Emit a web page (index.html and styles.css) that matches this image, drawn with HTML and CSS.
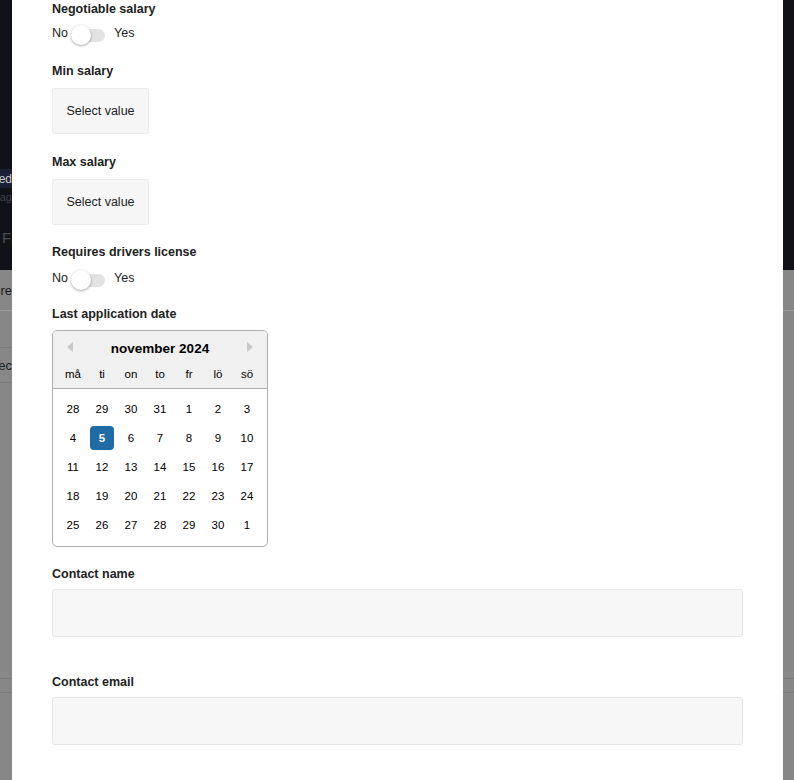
FILE: index.html
```html
<!DOCTYPE html>
<html lang="en">
<head>
<meta charset="utf-8">
<title>Job form</title>
<link rel="stylesheet" href="styles.css">
</head>
<body>
<div class="backdrop">
  <div class="bg-top">
    <div class="bg-band"><span>xed</span></div>
    <div class="bg-sub"><span>ag</span></div>
    <div class="bg-fa">Fä</div>
  </div>
  <div class="bg-bottom">
    <div class="bg-row bg-row1"><span>dre</span></div>
    <div class="bg-row bg-row2"></div>
    <div class="bg-row bg-row3"><span>sec</span></div>
    <div class="bg-foot"></div>
  </div>
</div>

<div class="modal">
  <div class="label">Negotiable salary</div>
  <div class="toggle-row first">
    <span>No</span>
    <span class="switch"><span class="track"></span><span class="knob"></span></span>
    <span class="yes">Yes</span>
  </div>

  <div class="label">Min salary</div>
  <div class="select-box">Select value</div>

  <div class="label">Max salary</div>
  <div class="select-box last">Select value</div>

  <div class="label">Requires drivers license</div>
  <div class="toggle-row second">
    <span>No</span>
    <span class="switch"><span class="track"></span><span class="knob"></span></span>
    <span class="yes">Yes</span>
  </div>

  <div class="label tight">Last application date</div>
  <div class="calendar">
    <div class="cal-header">
      <div class="cal-nav">
        <span class="arrow arrow-left"></span>
        <span class="cal-title">november 2024</span>
        <span class="arrow arrow-right"></span>
      </div>
      <div class="cal-grid cal-names">
        <span>må</span><span>ti</span><span>on</span><span>to</span><span>fr</span><span>lö</span><span>sö</span>
      </div>
    </div>
    <div class="cal-body">
      <div class="cal-grid">
        <span>28</span><span>29</span><span>30</span><span>31</span><span>1</span><span>2</span><span>3</span>
        <span>4</span><span class="sel">5</span><span>6</span><span>7</span><span>8</span><span>9</span><span>10</span>
        <span>11</span><span>12</span><span>13</span><span>14</span><span>15</span><span>16</span><span>17</span>
        <span>18</span><span>19</span><span>20</span><span>21</span><span>22</span><span>23</span><span>24</span>
        <span>25</span><span>26</span><span>27</span><span>28</span><span>29</span><span>30</span><span>1</span>
      </div>
    </div>
  </div>

  <div class="label contact">Contact name</div>
  <div class="text-input name"></div>

  <div class="label contact">Contact email</div>
  <div class="text-input"></div>
</div>
</body>
</html>
```
FILE: styles.css
```css
html, body {
  margin: 0;
  padding: 0;
}
body {
  width: 794px;
  height: 780px;
  overflow: hidden;
  position: relative;
  font-family: "Liberation Sans", Arial, Helvetica, sans-serif;
  color: #222;
}

/* dimmed page behind the modal */
.backdrop {
  width: 794px;
  height: 780px;
  display: flex;
  flex-direction: column;
}
.bg-top {
  height: 270px;
  background: #111218;
  padding-top: 169px;
  box-sizing: border-box;
}
.bg-band {
  width: 12px;
  height: 19px;
  background: #1b2133;
  display: flex;
  justify-content: flex-end;
  align-items: center;
  white-space: nowrap;
  font-size: 12px;
  color: #c9ccd3;
}
.bg-sub {
  width: 12px;
  height: 17px;
  display: flex;
  justify-content: flex-end;
  align-items: center;
  white-space: nowrap;
  font-size: 11px;
  color: #3d3f48;
}
.bg-fa {
  margin-top: 24px;
  padding-left: 2px;
  font-size: 15px;
  line-height: 18px;
  color: #4a4c55;
  white-space: nowrap;
}
.bg-bottom {
  flex: 1;
  background: #878787;
}
.bg-row {
  width: 300px;
  display: flex;
  align-items: center;
  box-sizing: border-box;
  border-bottom: 1px solid #9a9a9a;
}
.bg-row span {
  width: 12px;
  display: flex;
  justify-content: flex-end;
  white-space: nowrap;
  font-size: 13px;
  color: #1c1c1c;
}
.bg-row1 {
  width: 100%;
  height: 41px;
}
.bg-row2 {
  height: 37px;
  border-bottom-color: #7c7c7c;
}
.bg-row3 {
  height: 35px;
  border-bottom-color: #7c7c7c;
}
.bg-foot {
  margin-top: 295px;
  height: 15px;
  box-sizing: border-box;
  border-top: 1px solid #7c7c7c;
  border-bottom: 1px solid #7c7c7c;
}

/* modal */
.modal {
  position: absolute;
  left: 12px;
  top: 0;
  width: 771px;
  height: 780px;
  box-sizing: border-box;
  background: #fff;
  padding: 1px 40px 0;
}
.label {
  font-size: 12.5px;
  font-weight: bold;
  line-height: 16px;
  color: #222;
  margin-bottom: 9px;
}
.label.tight {
  margin-bottom: 8px;
}
.label.contact {
  margin-bottom: 7px;
}
.toggle-row {
  display: flex;
  align-items: center;
  height: 22px;
  font-size: 12.5px;
  color: #222;
}
.toggle-row.first {
  margin-top: -4px;
  margin-bottom: 19px;
}
.toggle-row.second {
  margin-top: -2px;
  margin-bottom: 17px;
}
.switch {
  position: relative;
  width: 34px;
  height: 20px;
  margin-left: 3px;
  margin-top: 4px;
  display: flex;
  align-items: center;
}
.track {
  width: 34px;
  height: 13px;
  border-radius: 7px;
  background: #e3e3e3;
}
.knob {
  position: absolute;
  left: 0;
  top: 0;
  width: 20px;
  height: 20px;
  border-radius: 50%;
  background: #fff;
  box-shadow: 0 1px 3px rgba(0, 0, 0, 0.35);
}
.yes {
  margin-left: 9px;
}
.select-box {
  width: 97px;
  height: 46px;
  box-sizing: border-box;
  background: #f6f6f6;
  border: 1px solid #ececec;
  border-radius: 2px;
  display: flex;
  align-items: center;
  justify-content: center;
  font-size: 12.5px;
  color: #222;
  margin-bottom: 20px;
}
.select-box.last {
  margin-bottom: 19px;
}

/* calendar */
.calendar {
  width: 216px;
  box-sizing: border-box;
  border: 1px solid #aeaeae;
  border-radius: 5px;
  overflow: hidden;
  margin-bottom: 19px;
  color: #000;
}
.cal-header {
  background: #f0f0f0;
  border-bottom: 1px solid #aeaeae;
  padding: 8px 0 3px;
}
.cal-nav {
  height: 20px;
  display: flex;
  align-items: center;
  justify-content: space-between;
  padding: 0 14px;
}
.cal-title {
  font-size: 13.5px;
  font-weight: bold;
  line-height: 20px;
}
.arrow {
  width: 0;
  height: 0;
  border-top: 5px solid transparent;
  border-bottom: 5px solid transparent;
  margin-bottom: 4px;
}
.arrow-left {
  border-right: 6px solid #c8c8c8;
}
.arrow-right {
  border-left: 6px solid #c8c8c8;
}
.cal-grid {
  display: grid;
  grid-template-columns: repeat(7, 29px);
  padding: 0 5.5px;
}
.cal-grid span {
  width: 24px;
  height: 24px;
  margin: 2.5px;
  display: flex;
  align-items: center;
  justify-content: center;
  font-size: 11.5px;
  border-radius: 4px;
}
.cal-names {
  margin-top: 4px;
}
.cal-names span {
  height: 22px;
  margin: 0 2.5px;
}
.cal-body {
  padding: 5px 0 7px;
}
.cal-grid span.sel {
  background: #216ba5;
  color: #fff;
  font-weight: bold;
}

.text-input {
  width: 691px;
  height: 48px;
  box-sizing: border-box;
  background: #f7f7f7;
  border: 1px solid #e7e7e7;
  border-radius: 3px;
}
.text-input.name {
  margin-bottom: 37px;
}
```
